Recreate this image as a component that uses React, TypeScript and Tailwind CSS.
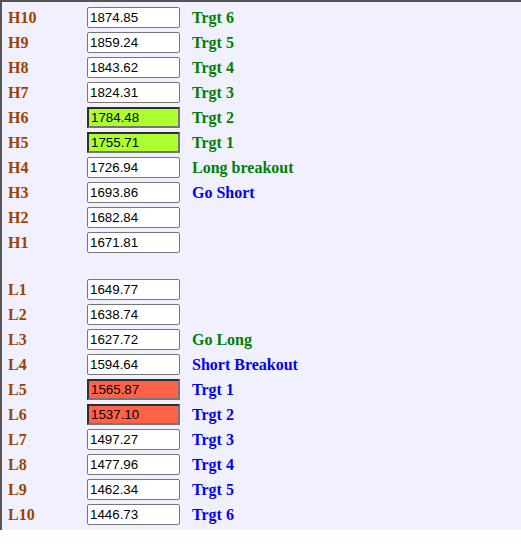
type Level = {
  name: string;
  value: string;
  note?: string;
  tone?: 'green' | 'blue';
  hit?: 'up' | 'down';
};

const highs: Level[] = [
  { name: 'H10', value: '1874.85', note: 'Trgt 6', tone: 'green' },
  { name: 'H9', value: '1859.24', note: 'Trgt 5', tone: 'green' },
  { name: 'H8', value: '1843.62', note: 'Trgt 4', tone: 'green' },
  { name: 'H7', value: '1824.31', note: 'Trgt 3', tone: 'green' },
  { name: 'H6', value: '1784.48', note: 'Trgt 2', tone: 'green', hit: 'up' },
  { name: 'H5', value: '1755.71', note: 'Trgt 1', tone: 'green', hit: 'up' },
  { name: 'H4', value: '1726.94', note: 'Long breakout', tone: 'green' },
  { name: 'H3', value: '1693.86', note: 'Go Short', tone: 'blue' },
  { name: 'H2', value: '1682.84' },
  { name: 'H1', value: '1671.81' },
];

const lows: Level[] = [
  { name: 'L1', value: '1649.77' },
  { name: 'L2', value: '1638.74' },
  { name: 'L3', value: '1627.72', note: 'Go Long', tone: 'green' },
  { name: 'L4', value: '1594.64', note: 'Short Breakout', tone: 'blue' },
  { name: 'L5', value: '1565.87', note: 'Trgt 1', tone: 'blue', hit: 'down' },
  { name: 'L6', value: '1537.10', note: 'Trgt 2', tone: 'blue', hit: 'down' },
  { name: 'L7', value: '1497.27', note: 'Trgt 3', tone: 'blue' },
  { name: 'L8', value: '1477.96', note: 'Trgt 4', tone: 'blue' },
  { name: 'L9', value: '1462.34', note: 'Trgt 5', tone: 'blue' },
  { name: 'L10', value: '1446.73', note: 'Trgt 6', tone: 'blue' },
];

function Row({ level }: { level: Level }) {
  let box = 'border border-[#767676] rounded-[2px] bg-white';
  if (level.hit === 'up') {
    box = 'border-2 border-t-[#2e2e2e] border-l-[#2e2e2e] border-r-[#767676] border-b-[#767676] bg-[#adff2f]';
  } else if (level.hit === 'down') {
    box = 'border-2 border-t-[#2e2e2e] border-l-[#2e2e2e] border-r-[#767676] border-b-[#767676] bg-[#ff6347]';
  }
  return (
    <div className="flex h-[25px] items-center">
      <div className="w-[79px] font-['Liberation_Serif',serif] text-[16px] font-bold text-[#a04000]">
        {level.name}
      </div>
      <input
        readOnly
        defaultValue={level.value}
        className={`h-[21px] w-[93px] px-[2px] font-['Liberation_Sans',Arial,sans-serif] text-[13.33px] text-black outline-none ${box}`}
      />
      {level.note && (
        <div
          className={`ml-3 font-['Liberation_Serif',serif] text-[16px] font-bold ${
            level.tone === 'green' ? 'text-[#008000]' : 'text-[#0000ff]'
          }`}
        >
          {level.note}
        </div>
      )}
    </div>
  );
}

export default function App() {
  return (
    <div className="min-h-[544px] bg-white">
      <div className="border-t-2 border-l-2 border-[#555] bg-[#f0f0ff] pl-[6px] pt-[3px] pb-[3px]">
        {highs.map((l) => (
          <Row key={l.name} level={l} />
        ))}
        <div className="h-[22px]" />
        {lows.map((l) => (
          <Row key={l.name} level={l} />
        ))}
      </div>
    </div>
  );
}
